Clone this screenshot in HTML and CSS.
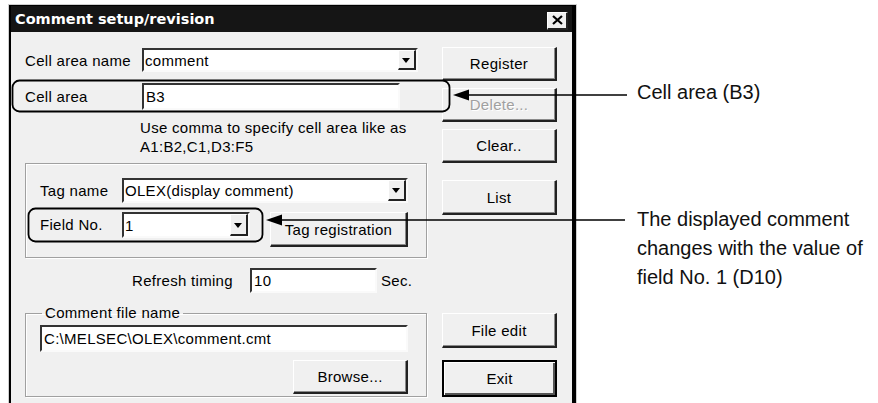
FILE: index.html
```html
<!DOCTYPE html>
<html lang="en">
<head>
    <meta charset="UTF-8">
    <title>Comment setup/revision</title>
    <link rel="stylesheet" href="styles.css">
</head>
<body>
    <div class="page">
        <div class="dialog">
            <div class="titlebar">
                <span class="title">Comment setup/revision</span>
                <span class="close">
                    <svg width="11" height="10" viewBox="0 0 11 10"><path d="M1 1 L10 9 M10 1 L1 9" stroke="#000" stroke-width="2.2"/></svg>
                </span>
            </div>
            <div class="dialog-body">
                <div class="left">
                    <div class="row row-name">
                        <span class="label">Cell area name</span>
                        <div class="combo combo-name"><span class="value">comment</span><span class="drop"></span></div>
                    </div>
                    <div class="row row-area">
                        <span class="label">Cell area</span>
                        <div class="edit edit-area">B3</div>
                    </div>
                    <p class="hint">Use comma to specify cell area like as<br>A1:B2,C1,D3:F5</p>

                    <div class="group group-tag">
                        <div class="row">
                            <span class="label label-tag">Tag name</span>
                            <div class="combo combo-tag"><span class="value">OLEX(display comment)</span><span class="drop"></span></div>
                        </div>
                        <div class="row row-field">
                            <span class="label label-tag">Field No.</span>
                            <div class="combo combo-field"><span class="value">1</span><span class="drop"></span></div>
                            <button class="btn btn-tagreg">Tag registration</button>
                        </div>
                    </div>

                    <div class="row row-refresh">
                        <span class="label-refresh">Refresh timing</span>
                        <div class="edit edit-refresh">10</div>
                        <span class="unit">Sec.</span>
                    </div>

                    <fieldset class="group group-file">
                        <legend>Comment file name</legend>
                        <div class="edit edit-path">C:\MELSEC\OLEX\comment.cmt</div>
                        <div class="browse-row"><button class="btn btn-browse">Browse...</button></div>
                    </fieldset>
                </div>

                <div class="buttons">
                    <button class="btn btn-register">Register</button>
                    <button class="btn btn-delete">Delete...</button>
                    <button class="btn btn-clear">Clear..</button>
                    <button class="btn btn-list">List</button>
                    <button class="btn btn-fileedit">File edit</button>
                    <button class="btn btn-exit">Exit</button>
                </div>
            </div>
        </div>

        <div class="notes">
            <p class="note note-area">Cell area (B3)</p>
            <p class="note note-field">The displayed comment<br>changes with the value of<br>field No. 1 (D10)</p>
        </div>

        <!-- callout frames and arrows drawn over the dialog -->
        <svg class="callouts" width="878" height="403" viewBox="0 0 878 403">
            <rect x="12.5" y="80.5" width="437" height="31" rx="7" fill="none" stroke="#000" stroke-width="1.8"/>
            <rect x="28.5" y="208.5" width="234" height="33" rx="7" fill="none" stroke="#000" stroke-width="1.8"/>
            <polygon points="453,95 469,89.5 469,100.5" fill="#000"/>
            <line x1="468" y1="95" x2="627" y2="95" stroke="#000" stroke-width="1.4"/>
            <polygon points="266,220 282,214.5 282,225.5" fill="#000"/>
            <line x1="281" y1="220" x2="625" y2="220" stroke="#000" stroke-width="1.4"/>
        </svg>
    </div>
</body>
</html>
```

FILE: styles.css
```css
body {
    margin: 0;
    font-family: "Liberation Sans", Arial, sans-serif;
    font-size: 15px;
    letter-spacing: 0.3px;
    color: #000;
    background-color: #fff;
}

.page {
    position: relative;
    display: flex;
    align-items: flex-start;
    width: 878px;
    height: 403px;
    overflow: hidden;
}

/* dialog window */

.dialog {
    margin: 5px 0 0 9px;
    width: 561px;
    height: 420px;
    flex-shrink: 0;
    border: solid #000;
    border-width: 1px 4px 0 2px;
    box-shadow: 0 0 0 1px #cfcfcf;
    background-color: #f0f0f0;
}

.titlebar {
    display: flex;
    align-items: center;
    justify-content: space-between;
    height: 26px;
    padding: 0 4px 0 4px;
    background-color: #151515;
}

.title {
    font-family: "DejaVu Sans", sans-serif;
    font-weight: bold;
    font-size: 14.5px;
    letter-spacing: 0;
    color: #fff;
}

.close {
    display: flex;
    align-items: center;
    justify-content: center;
    width: 21px;
    height: 18px;
    margin-top: 3px;
    box-sizing: border-box;
    background-color: #f0f0f0;
    border: solid;
    border-width: 1px 2px 2px 1px;
    border-color: #fff #222 #222 #fff;
}

.dialog-body {
    display: flex;
    gap: 15px;
    padding-left: 14px;
}

.left {
    width: 402px;
}

.row {
    display: flex;
    align-items: center;
}

.label {
    width: 117px;
    flex-shrink: 0;
}

.row-name {
    margin-top: 16px;
}

.row-area {
    margin-top: 11px;
}

.hint {
    margin: 8px 0 0 115px;
    line-height: 19px;
}

/* sunken fields */

.edit,
.combo {
    display: flex;
    align-items: center;
    box-sizing: border-box;
    background-color: #fff;
    border: 2px solid;
    border-color: #333 #fafafa #fafafa #333;
    white-space: nowrap;
}

.edit {
    padding-left: 2px;
}

.combo .value {
    flex: 1;
    padding-left: 1px;
}

.combo .drop {
    position: relative;
    align-self: stretch;
    width: 18px;
    box-sizing: border-box;
    background-color: #f0f0f0;
    border: solid;
    border-width: 1px 2px 2px 1px;
    border-color: #fff #222 #222 #fff;
}

.combo .drop::after {
    content: "";
    position: absolute;
    left: 3px;
    top: 50%;
    margin-top: -2px;
    border-left: 4px solid transparent;
    border-right: 4px solid transparent;
    border-top: 5px solid #000;
}

.combo-name {
    width: 276px;
    height: 24px;
}

.edit-area {
    width: 258px;
    height: 27px;
}

/* group boxes */

.group {
    box-sizing: border-box;
    width: 402px;
    margin: 0;
    border: 1px solid #a0a0a0;
    box-shadow: inset 1px 1px 0 #fff, 1px 1px 0 #fff;
}

.group-tag {
    height: 95px;
    margin-top: 7px;
    padding: 14px 18px 0 14px;
}

.label-tag {
    width: 82px;
}

.combo-tag {
    width: 286px;
    height: 25px;
}

.row-field {
    align-items: flex-start;
    margin-top: 9px;
}

.row-field .label {
    line-height: 26px;
}

.combo-field {
    width: 128px;
    height: 26px;
}

.btn-tagreg {
    width: 138px;
    height: 35px;
    margin-left: 20px;
}

.row-refresh {
    margin-top: 10px;
}

.label-refresh {
    width: 96px;
    margin-left: 107px;
    text-align: right;
    white-space: nowrap;
}

.edit-refresh {
    width: 127px;
    height: 25px;
    margin-left: 22px;
}

.unit {
    margin-left: 4px;
}

.group-file {
    margin-top: 12px;
    padding: 0 18px 2px 14px;
}

.group-file legend {
    margin-left: 2px;
    padding: 0 3px;
    line-height: 16px;
}

.edit-path {
    width: 368px;
    height: 27px;
    margin-top: 4px;
}

.browse-row {
    display: flex;
    justify-content: flex-end;
    margin-top: 8px;
}

.btn-browse {
    width: 115px;
    height: 34px;
}

/* raised buttons */

.btn {
    font-family: inherit;
    font-size: 15px;
    letter-spacing: 0.3px;
    color: #000;
    padding: 0;
    box-sizing: border-box;
    background-color: #f0f0f0;
    border: solid;
    border-width: 1px 2px 2px 1px;
    border-color: #fff #222 #222 #fff;
    box-shadow: inset -1px -1px 0 #8a8a8a;
}

.buttons {
    display: flex;
    flex-direction: column;
    width: 115px;
}

.buttons .btn {
    width: 115px;
    height: 34px;
}

.btn-register {
    margin-top: 15px;
}

.btn-delete {
    margin-top: 7px;
    color: #a0a0a0;
    text-shadow: 1px 1px 0 #fff;
}

.btn-clear {
    margin-top: 7px;
}

.buttons .btn-list {
    margin-top: 17px;
    height: 35px;
}

.buttons .btn-fileedit {
    margin-top: 98px;
    height: 35px;
}

.buttons .btn-exit {
    margin-top: 12px;
    height: 37px;
    border: 2px solid #000;
    box-shadow: inset 1px 1px 0 #fff, inset -2px -2px 0 #555;
}

/* annotations */

.notes {
    margin-left: 61px;
    font-size: 20px;
    line-height: 29px;
    letter-spacing: 0;
    color: #111;
    white-space: nowrap;
}

.note {
    margin: 0;
}

.note-area {
    margin-top: 78px;
}

.note-field {
    margin-top: 98px;
}

.callouts {
    position: absolute;
    left: 0;
    top: 0;
    pointer-events: none;
}
```
